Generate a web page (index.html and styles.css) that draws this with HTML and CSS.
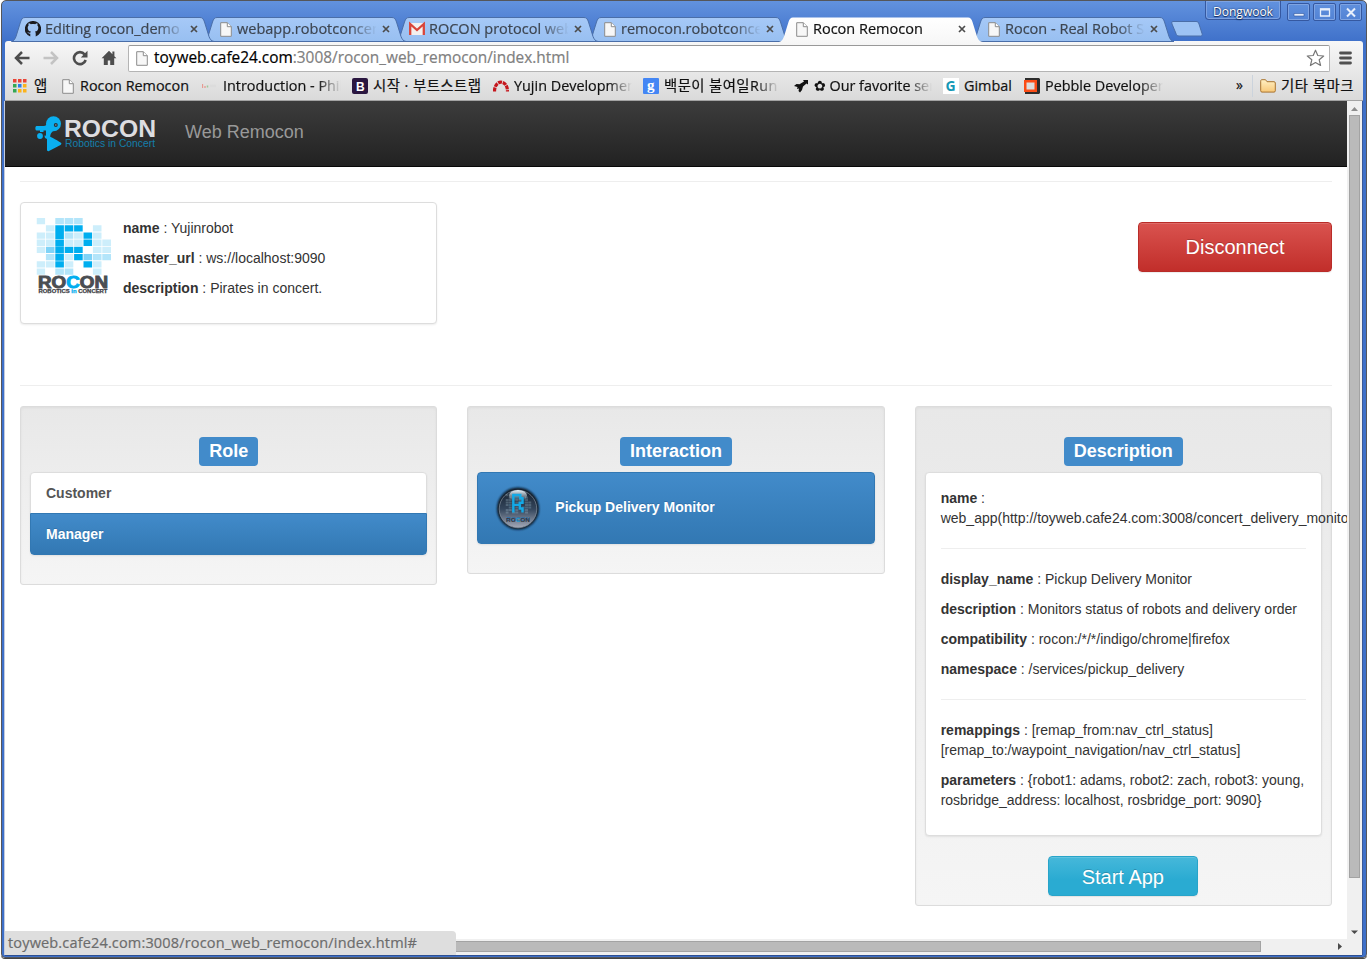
FILE: index.html
```html
<!DOCTYPE html>
<html lang="en">
<head>
<meta charset="utf-8">
<title>Rocon Remocon</title>
<link rel="stylesheet" href="styles.css">
</head>
<body>
<svg class="defs" width="0" height="0">
  <defs>
    <linearGradient id="tabFill" x1="0" y1="0" x2="0" y2="1"><stop offset="0" stop-color="#a6c9f7"/><stop offset="1" stop-color="#98bff1"/></linearGradient>
    <linearGradient id="tabActive" x1="0" y1="0" x2="0" y2="1"><stop offset="0" stop-color="#ffffff"/><stop offset="1" stop-color="#f7f7f7"/></linearGradient>
    <linearGradient id="folderFill" x1="0" y1="0" x2="0" y2="1"><stop offset="0" stop-color="#fff0c4"/><stop offset="1" stop-color="#f8c878"/></linearGradient>
    <linearGradient id="orbFill" x1="0" y1="0" x2="0" y2="1"><stop offset="0" stop-color="#16212e"/><stop offset=".5" stop-color="#34465c"/><stop offset="1" stop-color="#a4a9b8"/></linearGradient>
    <linearGradient id="orbShine" x1="0" y1="0" x2="0" y2="1"><stop offset="0" stop-color="#e6f3fb"/><stop offset="1" stop-color="#e6f3fb" stop-opacity="0"/></linearGradient>
    <filter id="soft" x="-20%" y="-20%" width="140%" height="140%"><feGaussianBlur stdDeviation="1.3"/></filter>
    <symbol id="page" viewBox="0 0 12 15"><path d="M.7.7h6.600l4 4v9.600H.7z" fill="#f7f7f7" stroke="#8c8c8c"/><path d="M7.300.7v4h4" fill="#fff" stroke="#8c8c8c"/></symbol>
    <symbol id="close" viewBox="0 0 8 8"><path d="M1 1l6 6M7 1L1 7" stroke="#4c4c4c" stroke-width="1.700"/></symbol>
    <symbol id="tab" viewBox="0 0 204 25"><path d="M.5 24.500C3 24 4 22 5 19.500L9.500 5C10.500 2 11.500.5 14 .5H189c2.500 0 3.500 1.500 4.500 4.500l4.500 14.500c1 2.500 2 4.500 5 5z" fill="url(#tabFill)" stroke="#4a6ea8"/></symbol>
    <symbol id="tabOn" viewBox="0 0 204 25"><path d="M0 25C3 24.500 4 22 5 19.500L9.500 5C10.500 2 11.500.5 14 .5H189c2.500 0 3.500 1.500 4.500 4.500l4.500 14.500c1 2.500 2 5 6 5.500z" fill="url(#tabActive)"/></symbol>
    <symbol id="pixels" viewBox="0 0 75 58">
      <path fill="#cdeefb" d="M0 0h8.600v6.300H0zM9.400 7.200H18v6.300H9.400zM56.400 7.200H65v6.300h-8.600zM0 14.400h8.600v6.300H0zM9.400 14.400H18v6.300H9.400zM37.600 14.400h8.600v6.300h-8.600zM56.400 14.400H65v6.300h-8.600zM0 21.600h8.600v6.300H0zM9.400 21.600H18v6.300H9.400zM28.200 21.600h8.600v6.300h-8.600zM37.600 21.600h8.600v6.300h-8.600zM56.400 21.600H65v6.300h-8.600zM0 28.800h8.600v6.300H0zM56.400 28.800H65v6.300h-8.600zM65.800 21.600h9v6.300h-9zM65.800 28.800h9v6.300h-9zM28.200 36h8.600v6.300h-8.600zM9.400 43.200H18v6.300H9.400zM0 43.200h8.600v6.300H0zM28.200 43.200h8.600v6.300h-8.600zM56.400 43.200H65v6.300h-8.600zM0 50.400h8.600v6.300H0zM56.400 50.400H65v6.300h-8.600z"/>
      <path fill="#b3e5fa" d="M18.800 0h8.600v6.300h-8.600zM28.200 0h8.600v6.300h-8.600zM37.600 0h8.600v6.300h-8.600zM28.200 14.400h8.600v6.300h-8.600zM9.400 36H18v6.300H9.400zM56.400 36H65v6.300h-8.600zM65.800 36h9v6.300h-9zM18.800 50.400h8.600v6.300h-8.600zM28.200 50.400h8.600v6.300h-8.600z"/>
      <path fill="#7fd3f7" d="M9.400 28.800H18v6.300H9.400zM47 36h8.600v6.300H47z"/>
      <path fill="#00aeef" d="M18.800 7.200h8.600v7.200h-8.600zM28.200 7.200h8.600v6.300h-8.600zM37.600 7.200h8.600v6.300h-8.600zM18.800 14.400h8.600v6.700h-8.600zM47 14.400h8.600v6.300H47zM18.800 21.600h8.600v6.800h-8.600zM47 21.600h8.600v6.300H47zM18.800 28.800h8.600v6.800h-8.600zM28.200 28.800h8.600v6.300h-8.600zM37.600 28.800h8.600v6.300h-8.600zM18.800 36h8.600v6.800h-8.600zM37.600 36h8.600v6.300h-8.600zM18.800 43.200h8.600v6.300h-8.600zM47 43.200h8.600v6.300H47z"/>
    </symbol>
  </defs>
</svg>
<div class="window">
  <header class="titlebar">
    <div class="tabs">
      <div class="tab t1"><svg class="shape"><use href="#tab"/></svg>
        <svg class="fav" width="16" height="16" viewBox="0 0 16 16"><path fill="#1b1b1f" d="M8 0a8 8 0 0 0-2.700 15.600V12.800C3.500 13 2.800 11.600 2.300 11c.9-.2 1.500 1.200 3 .8.100-.6.400-1 .7-1.200C4 10.300 2.700 9.300 2.700 6.800c0-1 .3-1.700.9-2.300-.2-.6-.2-1.500.1-2.200.8 0 1.600.5 2.200.9 1.300-.4 2.900-.4 4.200 0 .7-.5 1.500-.9 2.200-.9.300.7.300 1.600.1 2.200.6.600.9 1.300.9 2.300 0 2.500-1.300 3.500-3.300 3.800.4.400.7.900.7 1.800v3.200A8 8 0 0 0 8 0z"/></svg>
        <span class="label">Editing rocon_demo</span><svg class="x"><use href="#close"/></svg></div>
      <div class="tab t2"><svg class="shape"><use href="#tab"/></svg><svg class="fav pg"><use href="#page"/></svg><span class="label">webapp.robotconcert</span><svg class="x"><use href="#close"/></svg></div>
      <div class="tab t3"><svg class="shape"><use href="#tab"/></svg>
        <svg class="fav" width="16" height="16" viewBox="0 0 16 16"><path fill="#f4f0ee" d="M1 2h14v12H1z"/><path d="M1.200 14V3L8 9l6.800-6v11" fill="none" stroke="#d9453a" stroke-width="2.300"/></svg>
        <span class="label">ROCON protocol web</span><svg class="x"><use href="#close"/></svg></div>
      <div class="tab t4"><svg class="shape"><use href="#tab"/></svg><svg class="fav pg"><use href="#page"/></svg><span class="label">remocon.robotconcert</span><svg class="x"><use href="#close"/></svg></div>
      <div class="tab t5 on"><svg class="shape"><use href="#tabOn"/></svg><svg class="fav pg"><use href="#page"/></svg><span class="label">Rocon Remocon</span><svg class="x"><use href="#close"/></svg></div>
      <div class="tab t6"><svg class="shape"><use href="#tab"/></svg><svg class="fav pg"><use href="#page"/></svg><span class="label">Rocon - Real Robot S</span><svg class="x"><use href="#close"/></svg></div>
      <svg class="newtab" width="32" height="16" viewBox="0 0 32 16"><path d="M2 .5h23c2 0 2.500 1 3 2.500l3 9.500c.5 1.500 0 2.500-1.500 2.500H8c-2 0-2.500-1-3-2.500L1 3C.5 1.500.8.5 2 .5z" fill="#9dc3f4" stroke="#4a6ea8"/></svg>
    </div>
    <div class="controls">
      <div class="user">Dongwook</div>
      <div class="wb"><svg width="22" height="17"><path d="M6 9.500h10V12H6z" fill="#e8f0fc" stroke="#2f559c" stroke-width=".6"/></svg></div>
      <div class="wb"><svg width="22" height="17"><path d="M6.500 5h9v7h-9z" fill="none" stroke="#e8f0fc" stroke-width="1.300"/><path d="M6 5.500h10" stroke="#e8f0fc" stroke-width="2"/></svg></div>
      <div class="wb"><svg width="22" height="17"><path d="M7 4.500l8 8M15 4.500l-8 8" stroke="#e8f0fc" stroke-width="2"/></svg></div>
    </div>
  </header>
  <div class="chrome">
    <div class="toolbar">
      <svg class="nav" width="16" height="16" viewBox="0 0 16 16"><path d="M15.500 8H2M8 2L2 8l6 6" fill="none" stroke="#4d4d4d" stroke-width="2.500"/></svg>
      <svg class="nav" width="16" height="16" viewBox="0 0 16 16"><path d="M.5 8H14M8 2l6 6-6 6" fill="none" stroke="#c3c3c3" stroke-width="2.500"/></svg>
      <svg class="nav" width="16" height="16" viewBox="0 0 16 16"><path d="M12.600 4.300A6 6 0 1 0 13.700 10" fill="none" stroke="#4d4d4d" stroke-width="2.600"/><path d="M15.500.8v6.700H8.800z" fill="#4d4d4d"/></svg>
      <svg class="nav" width="16" height="16" viewBox="0 0 16 16"><path d="M8 .8L.6 8.300h2.200V15h4v-4.500h2.400V15h4V8.300h2.200l-2-2V1.500h-2v2.800z" fill="#4d4d4d"/></svg>
      <div class="omnibox"><svg class="pg"><use href="#page"/></svg><span class="url"><b>toyweb.cafe24.com</b>:3008/rocon_web_remocon/index.html</span>
        <svg class="star" width="19" height="18" viewBox="0 0 19 18"><path d="M9.500 1.200l2.300 5.300 5.900.5-4.500 3.800 1.400 5.700-5.100-3-5.100 3 1.400-5.700L1.300 7l5.900-.5z" fill="#fff" stroke="#777" stroke-width="1.200" stroke-linejoin="round"/></svg></div>
      <svg class="menu" width="13" height="14"><path d="M1.500 2h10M1.500 7h10M1.500 12h10" stroke="#505050" stroke-width="2.800" stroke-linecap="round"/></svg>
    </div>
    <div class="bookmarks">
      <div class="bm b-apps"><svg width="14" height="14"><path fill="#ea4335" d="M0 0h3.500v3.500H0zM5 0h3.500v3.500H5zM10 0h3.500v3.500H10z"/><path fill="#34a853" d="M0 5h3.500v3.500H0zM0 10h3.500v3.500H0z"/><path fill="#2b7de9" d="M5 5h3.500v3.500H5z"/><path fill="#fbb31c" d="M10 5h3.500v3.500H10zM5 10h3.500v3.500H5zM10 10h3.500v3.500H10z"/></svg><span>앱</span></div>
      <div class="bm b-rocon"><svg class="pg"><use href="#page"/></svg><span>Rocon Remocon</span></div>
      <div class="bm b-intro"><svg width="16" height="16"><path d="M.5 6v4M3 8v2" stroke="#e79a92" stroke-width="1.300"/><path d="M5.500 7.500v2" stroke="#9cc79a" stroke-width="1.500"/><path d="M8 8h6" stroke="#dcdcdc" stroke-width="2.500"/></svg><span class="fade">Introduction - Philo</span></div>
      <div class="bm b-boot"><svg width="16" height="16"><rect width="16" height="16" rx="2" fill="#2a1640"/><text x="4" y="12.500" class="ico-b">B</text></svg><span>시작 · 부트스트랩</span></div>
      <div class="bm b-yujin"><svg width="16" height="16"><path d="M1.500 13.500C1.500 1 14.500 1 14.500 13.500" fill="none" stroke="#c5161d" stroke-width="3.200" stroke-dasharray="4 .8"/></svg><span class="fade">Yujin Developmen</span></div>
      <div class="bm b-run"><svg width="16" height="16"><rect width="16" height="16" rx="1" fill="#4486f4"/><text x="4" y="12" class="ico-g">g</text></svg><span class="fade">백문이 불여일Run</span></div>
      <div class="bm b-fav"><svg width="16" height="16"><path d="M1 8l2.500-2 3 .3L11 3.500 10 2h5v4.500l-1.500-1L10 8.500 9 12l-2 2.500L5.500 13l.5-2.500-2 .5.500-2z" fill="#111"/></svg><span class="fade"><i>✿</i> Our favorite ser</span></div>
      <div class="bm b-gimbal"><svg width="16" height="16"><path fill="#fff" d="M0 0h16v16H0z"/><text x="2.500" y="13" class="ico-gb">G</text></svg><span>Gimbal</span></div>
      <div class="bm b-pebble"><svg width="16" height="16"><path d="M1 0h14l1 1v14l-1 1H1z" fill="#2d2d2d"/><path d="M0 2h13v12H0z" fill="#fb4c16"/><path d="M2.500 4.500h8v7h-8z" fill="#ddd"/></svg><span class="fade">Pebble Developer</span></div>
      <div class="more">»</div>
      <div class="bm b-other"><svg width="16" height="14" viewBox="0 0 16 14"><path d="M.7 2.200C.7 1.200 1 .7 2 .7h3.500l1.500 2h7c.8 0 1.300.5 1.300 1.300v7.800c0 .8-.5 1.300-1.300 1.300H2c-.8 0-1.300-.5-1.300-1.300z" fill="url(#folderFill)" stroke="#a9742f"/></svg><span>기타 북마크</span></div>
    </div>
  </div>
  <div class="view">
    <main class="page">
      <nav class="navbar">
        <svg class="brand" width="122" height="38" viewBox="0 0 122 38">
          <g fill="#0aaff0"><circle cx="18.500" cy="8.800" r="7.500"/><path d="M13 5c-1 5-2 6-5 6H1.500C0 11 0 15.500 1.500 15.500H5v1.500h3.500V15.500h2.500v8h4.500c-1-4 1-7 5-9z"/><circle cx="5" cy="21" r="2.900"/><path d="M9.500 20.500c5 0 12 4.500 16 7 1.200.7 1.200 1.700 0 2.400L14 36c-1 .5-2 0-2-1V23.500c-1.500 0-2.500-.5-2.500-3z"/></g>
          <circle cx="20.800" cy="10" r="2" fill="#26323a"/><circle cx="20.800" cy="10" r=".9" fill="#6d7b83"/>
          <text x="29" y="22" class="logo-big" textLength="92" lengthAdjust="spacingAndGlyphs">ROCON</text>
          <text x="30" y="31.500" class="logo-small" textLength="90" lengthAdjust="spacingAndGlyphs">Robotics in Concert</text>
        </svg>
        <span class="nav-title">Web Remocon</span>
      </nav>
      <div class="container">
        <hr class="first">
        <section class="row top">
          <div class="col">
            <div class="panel info">
              <svg class="concert" width="75" height="76" viewBox="0 0 75 76"><use href="#pixels" x=".5" width="75" height="58"/>
                <text x="2" y="74" class="c-big" transform="translate(0 -4)" textLength="70" lengthAdjust="spacingAndGlyphs">RO<tspan>C</tspan>ON</text>
                <text x="2.500" y="75.400" class="c-small" textLength="69" lengthAdjust="spacingAndGlyphs">ROBOTICS <tspan>in</tspan> CONCERT</text></svg>
              <div><p><b>name</b> : Yujinrobot</p><p><b>master_url</b> : ws://localhost:9090</p><p><b>description</b> : Pirates in concert.</p></div>
            </div>
          </div>
          <button class="btn danger">Disconnect</button>
        </section>
        <hr class="second">
        <section class="row">
          <div class="col"><div class="well"><h3><span>Role</span></h3>
            <div class="list"><a class="item">Customer</a><a class="item active">Manager</a></div></div></div>
          <div class="col"><div class="well"><h3><span>Interaction</span></h3>
            <div class="list"><a class="item active app">
              <svg width="50" height="50" viewBox="0 0 50 50"><circle cx="25" cy="25.500" r="21" fill="#0c1722" filter="url(#soft)"/><circle cx="25" cy="26" r="18.800" fill="url(#orbFill)" stroke="#8895a3" stroke-width=".7"/><ellipse cx="25" cy="12.500" rx="9" ry="5.500" fill="url(#orbShine)"/><use href="#pixels" x="12.500" y="9" width="26" height="24" opacity=".22"/><path d="M20.300 29.500V12h7v3.200h2.200v4.500h-2.800v2.200h-5.400M26.800 22v3.500h2.700v4" fill="none" stroke="#14a9e6" stroke-width="2.400"/><text x="13" y="39" class="orb-text" textLength="24" lengthAdjust="spacingAndGlyphs">RO<tspan fill="#149bd2">C</tspan>ON</text></svg>
              <span>Pickup Delivery Monitor</span></a></div></div></div>
          <div class="col"><div class="well desc"><h3><span>Description</span></h3>
            <div class="panel">
              <p><b>name</b> : web_app(http://toyweb.cafe24.com:3008/concert_delivery_monitor/index.html)</p>
              <hr>
              <p><b>display_name</b> : Pickup Delivery Monitor</p>
              <p><b>description</b> : Monitors status of robots and delivery order</p>
              <p><b>compatibility</b> : rocon:/*/*/indigo/chrome|firefox</p>
              <p><b>namespace</b> : /services/pickup_delivery</p>
              <hr>
              <p><b>remappings</b> : [remap_from:nav_ctrl_status] [remap_to:/waypoint_navigation/nav_ctrl_status]</p>
              <p><b>parameters</b> : {robot1: adams, robot2: zach, robot3: young, rosbridge_address: localhost, rosbridge_port: 9090}</p>
            </div>
            <button class="btn start">Start App</button>
          </div></div>
        </section>
      </div>
    </main>
    <div class="vbar"><svg width="15" height="14"><path d="M4 10l3.500-4L11 10z" fill="#8d8d8d"/></svg><div class="vthumb"></div><svg width="15" height="14"><path d="M4 5.500h7L7.500 9z" fill="#4a4a4a"/></svg></div>
    <div class="hbar"><div class="hthumb"></div><svg width="15" height="15"><path d="M6 4v7l4-3.500z" fill="#4a4a4a"/></svg></div>
    <div class="status">toyweb.cafe24.com:3008/rocon_web_remocon/index.html#</div>
  </div>
</div>
</body>
</html>
```
FILE: styles.css
```css
* { box-sizing: border-box; }
body { margin: 0; width: 1367px; height: 959px; overflow: hidden; background: #fff; font-family: "Liberation Sans", Arial, sans-serif; }
.defs { position: absolute; }
svg { display: block; flex: none; }
.window { width: 1366px; height: 958px; margin: 0 0 0 1px; border: 1px solid #55565a; border-radius: 5px 5px 4px 4px; overflow: hidden;
  background: linear-gradient(#6292de 0, #3e70c9 42px, #3e70c9); display: flex; flex-direction: column; box-shadow: 0 1px 0 #444; }

/* tab strip */
.titlebar { height: 40px; flex: none; display: flex; justify-content: space-between; font-family: "Open Sans", sans-serif; }
.tabs { display: flex; align-items: flex-start; padding: 16px 0 0 9px; }
.tab { position: relative; width: 192px; height: 24px; display: flex; align-items: center; padding-left: 14px; color: #3d4550; }
.shape { position: absolute; left: 0; top: 0; width: 204px; height: 25px; }
.fav, .label, .x { position: relative; }
.fav { margin-right: 4px; }
.pg { width: 12px; height: 15px; }
.tab .pg { margin: 0 5px 0 3px; }
.label { width: 139px; font-size: 14.5px; line-height: 22px; white-space: nowrap; overflow: hidden; -webkit-text-stroke: .2px; -webkit-mask-image: linear-gradient(90deg, #000 112px, transparent 140px); mask-image: linear-gradient(90deg, #000 112px, transparent 140px); }
.x { width: 8px; height: 8px; margin-left: 6px; }
.t1 { z-index: 6; } .t2 { z-index: 5; } .t3 { z-index: 4; } .t4 { z-index: 3; } .t6 { z-index: 1; }
.on { z-index: 9; color: #111; }
.newtab { margin: 4px 0 0 8px; }
.controls { display: flex; }
.user { width: 76px; height: 19px; margin-right: 6px; border: 1px solid #3558a0; border-top: 0; border-radius: 0 0 4px 4px; box-shadow: inset 0 0 0 1px #7ea3e2; color: #fff; font-size: 12px; line-height: 21px; text-align: center; text-shadow: 0 0 2px #102a5c, 0 1px 1px #102a5c; }
.wb { width: 23px; height: 18px; margin: 2px 3px 0 0; border: 1px solid #3558a0; border-radius: 2px; box-shadow: inset 0 0 0 1px #7ea3e2; }
.wb:last-child { margin-right: 4px; }

/* toolbar and bookmarks */
.chrome { width: 1358px; height: 60px; flex: none; margin-left: 3px; border-bottom: 1px solid #a3a3a3; border-radius: 3px 3px 0 0; background: linear-gradient(#f7f7f7, #dadada); font-family: "Open Sans", "Noto Sans CJK KR", sans-serif; color: #111; -webkit-text-stroke: .2px; }
.toolbar { display: flex; height: 34px; align-items: center; padding-left: 9px; }
.nav { margin-right: 13px; }
.omnibox { display: flex; align-items: center; width: 1202px; height: 27px; margin-left: -2px; padding: 0 4px 0 7px; background: #fff; border: 1px solid #b4b4b4; border-radius: 2px; border-top-color: #999; }
.url { flex: 1; margin-left: 6px; font-size: 15.4px; line-height: 24px; color: #808080; }
.url b { color: #000; font-weight: 400; }
.menu { margin-left: 9px; }
.bookmarks { display: flex; height: 22px; align-items: center; padding-left: 8px; font-size: 14.4px; white-space: nowrap; }
.bm { display: flex; align-items: center; flex: none; }
.bm span { margin-left: 5px; overflow: hidden; line-height: 22px; }
.bm i { font: 14px/1 "DejaVu Sans", sans-serif; }
.bm .fade { flex: 1; -webkit-mask-image: linear-gradient(90deg, #000 80%, transparent 100%); mask-image: linear-gradient(90deg, #000 80%, transparent 100%); }
.b-apps { width: 49px; }
.b-apps span { margin-left: 7px; }
.b-rocon { width: 140px; }
.b-rocon span { margin-left: 6px; }
.b-intro { width: 139px; margin-right: 11px; }
.b-boot { width: 141px; letter-spacing: .45px; }
.b-yujin { width: 139px; margin-right: 11px; }
.b-run { width: 136px; margin-right: 14px; letter-spacing: .4px; }
.b-fav { width: 139px; margin-right: 11px; }
.b-gimbal { width: 81px; }
.b-pebble { width: 139px; }
.more { width: 16px; margin-left: 73px; font-size: 14px; line-height: 18px; padding-bottom: 3px; }
.b-other { padding-left: 7px; border-left: 1px solid #cbd3dc; letter-spacing: .5px; }
.ico-b { font: bold 12px "Liberation Sans", sans-serif; fill: #fff; }
.ico-g { font: bold 15px "Liberation Serif", serif; fill: #fff; }
.ico-gb { font: bold 14px "Open Sans", sans-serif; fill: #1598b5; }

/* viewport with scrollbars */
.view { position: relative; display: grid; grid-template: 838px 16px / 1342px 15px; margin-left: 3px; width: 1357px; height: 854px; background: #f0f0f0; box-shadow: 0 1px 0 #2d4f92, -1px 0 0 #c3cbdc, 1px 0 0 #3a5a9a; }
.page { overflow: hidden; background: #fff; color: #333; font-size: 14px; line-height: 20px; }
.vbar { display: flex; flex-direction: column; background: #f0f0f0; }
.vthumb { height: 763px; margin: 0 2px 47px; background: #bababa; border: 1px solid #a3a3a3; }
.hbar { display: flex; width: 1342px; }
.hthumb { width: 1254px; height: 11px; margin: 2px 71px 0 2px; background: #bababa; border: 1px solid #a3a3a3; }
.status { position: absolute; left: 0; bottom: 0; width: 451px; height: 24px; padding-left: 3px; background: #dedede; border-radius: 0 4px 0 0; color: #6c6c6c; font: 14.5px/23px "Open Sans", sans-serif; letter-spacing: .16px; -webkit-text-stroke: .2px; white-space: nowrap; }

/* page content */
.navbar { display: flex; height: 66px; padding: 14px 0 0 30px; background: linear-gradient(#3c3c3c, #222); border-bottom: 1px solid #080808; }
.nav-title { margin: 7px 0 0 28px; font-size: 18px; color: #999; }
.logo-big { font: bold 24px "Liberation Sans", sans-serif; fill: #dddde0; }
.logo-small { font: 10px "Liberation Sans", sans-serif; fill: #147fab; }
.container { padding: 0 15px; }
hr { height: 1px; margin: 20px 0; border: 0; background: #eee; }
hr.first { margin: 14px 0 20px; }
hr.second { margin: 0 0 20px; }
.row { display: grid; grid-template-columns: repeat(3, minmax(0, 1fr)); column-gap: 30px; align-items: start; }
.top { grid-template-columns: 417.33px 194px; justify-content: space-between; height: 183px; }
p { margin: 0 0 10px; }
.panel { padding: 15px; background: #fff; border: 1px solid #ddd; border-radius: 4px; box-shadow: 0 1px 2px rgba(0,0,0,.075); }
.info { display: flex; gap: 12px; }
.c-big { font: bold 16px "Liberation Sans", sans-serif; fill: #4a4d52; stroke: #4a4d52; stroke-width: .9px; }
.c-big tspan, .c-small tspan { fill: #00aeef; stroke: #00aeef; }
.c-small { font: bold 5px "Liberation Sans", sans-serif; fill: #3f4247; stroke: #3f4247; stroke-width: .25px; }
.btn { display: block; padding: 0; font-family: inherit; font-size: 20px; color: #fff; text-shadow: 0 -1px 0 rgba(0,0,0,.2); border-radius: 4px; box-shadow: inset 0 1px 0 rgba(255,255,255,.15), 0 1px 1px rgba(0,0,0,.075); }
.danger { height: 50px; margin-top: 20px; border: 1px solid #b92c28; background: linear-gradient(#d9534f, #c12e2a); }
.start { width: 150px; height: 40px; margin: 20px auto 0; padding: 2px 1px 0 0; border: 1px solid #28a4c9; background: linear-gradient(#46b8da, #2aabd2 60%); }
.well { padding: 9px; border: 1px solid #dcdcdc; border-radius: 3px; background: linear-gradient(#e8e8e8, #f5f5f5); box-shadow: inset 0 1px 3px rgba(0,0,0,.05), 0 1px 0 rgba(255,255,255,.1); }
h3 { display: flex; justify-content: center; margin: 21px 0 6px; font-size: 18px; }
h3 span { height: 29px; padding: 0 10px; border-radius: 4px; background: #428bca; color: #fff; line-height: 28px; }
.list { margin-bottom: 20px; border-radius: 4px; box-shadow: 0 1px 2px rgba(0,0,0,.075); }
.item { display: block; padding: 10px 15px; border: 1px solid #ddd; background: #fff; color: #555; font-weight: bold; }
.item:first-child { border-radius: 4px 4px 0 0; }
.item:last-child { border-radius: 0 0 4px 4px; }
.item:only-child { border-radius: 4px; }
.item + .item { margin-top: -1px; position: relative; }
.active { color: #fff; background: linear-gradient(#428bca, #3278b3); border-color: #3278b3; text-shadow: 0 -1px 0 #3071a9; }
.app { display: flex; gap: 12px; height: 72px; padding: 10px 15px; }
.app span { margin-top: 14px; }
.orb-text { font: bold 6px "Liberation Sans", sans-serif; fill: #33363f; }
```
